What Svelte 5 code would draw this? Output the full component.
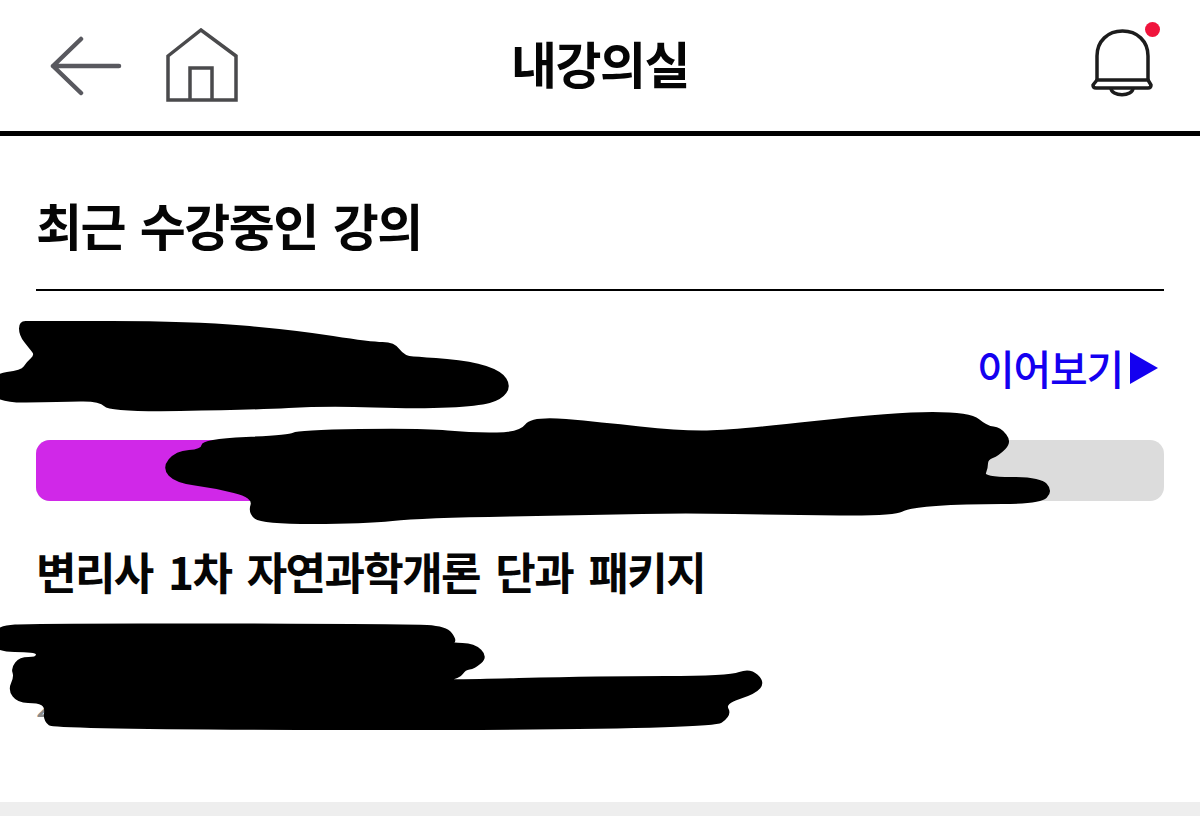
<script>
  // marker strokes that cover the private parts of the screenshot
  const blobs = [
    [[31,322],[191,322],[295,331],[371,343],[394,343],[404,357],[423,358],[471,362],[501,372],[510,386],[501,399],[478,405],[420,408],[327,405],[250,409],[110,411],[100,400],[60,401],[-8,402],[-8,375],[22,371],[27,363],[36,355],[30,348],[20,335],[20,322]],
    [[203,440],[289,436],[298,431],[421,429],[474,434],[520,433],[532,417],[600,423],[680,432],[734,431],[895,413],[970,413],[987,427],[1000,428],[1011,442],[998,455],[987,459],[987,468],[983,478],[1040,478],[1052,491],[1040,503],[964,503],[908,507],[895,515],[784,514],[684,512],[600,514],[421,517],[364,523],[262,523],[249,513],[254,497],[214,487],[176,482],[163,468],[176,452],[202,450]],
    [[-8,627],[38,624],[408,625],[446,627],[456,640],[451,644],[474,644],[487,657],[474,668],[465,669],[459,678],[436,681],[602,677],[729,677],[750,669],[764,682],[755,693],[724,703],[731,715],[711,729],[55,729],[44,720],[46,707],[38,702],[18,702],[9,690],[15,677],[12,668],[20,658],[37,658],[37,651],[-8,651]]
  ];

  // rounds the marker outline: runs through edge midpoints, corners as control points
  const toPath = (pts) => {
    const mid = (a, b) => `${(a[0] + b[0]) / 2} ${(a[1] + b[1]) / 2}`;
    let d = `M${mid(pts[pts.length - 1], pts[0])}`;
    pts.forEach((p, i) => {
      d += `Q${p[0]} ${p[1]} ${mid(p, pts[(i + 1) % pts.length])}`;
    });
    return d + 'Z';
  };
</script>

<div class="page">
  <header class="topbar">
    <div class="nav-left">
      <svg class="icon-back" width="72" height="60" viewBox="0 0 72 60" fill="none" stroke="#59595f" stroke-width="4.5" stroke-linecap="round" stroke-linejoin="round">
        <path d="M31 3 L3 30 L31 57 M3 30 H69" />
      </svg>
      <svg class="icon-home" width="72" height="74" viewBox="0 0 72 74" fill="none" stroke="#4a4a4c" stroke-width="3.5" stroke-linejoin="miter">
        <path d="M2 28 L35 2 L70 28 V72 H2 Z" />
        <path d="M24 72 V40 H46 V72" />
      </svg>
    </div>
    <h1 class="page-title">내강의실</h1>
    <div class="nav-right">
      <span class="bell">
        <svg width="64" height="70" viewBox="0 0 64 70" fill="none" stroke="#1c1c1c" stroke-width="3.5" stroke-linejoin="round">
          <path d="M7 51 V27 C7 12 18 2 32.5 2 C47 2 58 12 58 27 V51" />
          <path d="M7 51 H58 L61 56 Q61 59 58 59 H6 Q3 59 3 56 Z" />
          <path d="M21 59 C21 68 43 68 43 59" />
        </svg>
        <span class="bell-dot"></span>
      </span>
    </div>
  </header>

  <main class="content">
    <h2 class="section-title">최근 수강중인 강의</h2>
    <div class="course">
      <div class="course-top">
        <a class="resume" href="#resume">이어보기<span class="arrow"></span></a>
      </div>
      <div class="progress">
        <div class="progress-fill" style="width: {25}%"></div>
      </div>
      <p class="course-name">변리사 1차 자연과학개론 단과 패키지</p>
      <p class="course-meta">2</p>
    </div>
  </main>

  <div class="bottom-strip"></div>

  <svg class="scribble" width="1200" height="816" viewBox="0 0 1200 816" aria-hidden="true">
    {#each blobs as pts}
      <path d={toPath(pts)} fill="#000" stroke="#000" stroke-width="2" stroke-linejoin="round" />
    {/each}
  </svg>
</div>

<style>
  :global(body) {
    margin: 0;
    background: #fff;
  }

  .page {
    position: relative;
    height: 816px;
    overflow: hidden;
    display: flex;
    flex-direction: column;
    font-family: "Noto Sans CJK KR", "Noto Sans", sans-serif;
    color: #050505;
  }

  .topbar {
    height: 131px;
    flex-shrink: 0;
    box-sizing: content-box;
    border-bottom: 5px solid #000;
    display: grid;
    grid-template-columns: 1fr auto 1fr;
    align-items: center;
    padding: 0 46px 0 46px;
  }

  .nav-left {
    display: flex;
    align-items: center;
    gap: 44px;
    padding-left: 4px;
  }

  .icon-home {
    margin-top: -2px;
  }

  .page-title {
    margin: -8px 0 0;
    font-size: 50px;
    font-weight: 700;
    letter-spacing: -1.5px;
    line-height: 1.2;
  }

  .nav-right {
    display: flex;
    justify-content: flex-end;
  }

  .bell {
    position: relative;
    display: block;
    width: 64px;
    height: 70px;
    margin-top: -4px;
  }

  .bell-dot {
    position: absolute;
    top: -7px;
    right: -6px;
    width: 15px;
    height: 15px;
    border-radius: 50%;
    background: #f0143c;
  }

  .content {
    flex: 1;
    padding: 0 36px;
  }

  .section-title {
    margin: 0;
    height: 155px;
    box-sizing: border-box;
    border-bottom: 2px solid #000;
    padding-top: 54px;
    font-size: 50px;
    font-weight: 700;
    letter-spacing: -1.5px;
    word-spacing: 5px;
    line-height: 68px;
  }

  .course-top {
    display: flex;
    justify-content: flex-end;
    align-items: center;
    height: 149px;
    padding-top: 4px;
    box-sizing: border-box;
  }

  .resume {
    display: flex;
    align-items: center;
    gap: 7px;
    margin-right: 6px;
    color: #1400f0;
    font-size: 41px;
    font-weight: 500;
    letter-spacing: -1.2px;
    line-height: 1;
    text-decoration: none;
  }

  .arrow {
    width: 0;
    height: 0;
    border-left: 28px solid #1400f0;
    border-top: 16px solid transparent;
    border-bottom: 16px solid transparent;
  }

  .progress {
    height: 61px;
    border-radius: 14px;
    background: #dcdcdc;
    overflow: hidden;
  }

  .progress-fill {
    height: 100%;
    background: #d028e8;
  }

  .course-name {
    margin: 40px 0 0;
    font-size: 44px;
    font-weight: 700;
    letter-spacing: -1.6px;
    word-spacing: 7px;
    line-height: 60px;
  }

  .course-meta {
    margin: 80px 0 0;
    color: #8a8a8a;
    font-size: 34px;
    line-height: 44px;
  }

  .bottom-strip {
    height: 14px;
    flex-shrink: 0;
    background: #eee;
  }

  .scribble {
    position: absolute;
    top: 0;
    left: 0;
    pointer-events: none;
  }
</style>
